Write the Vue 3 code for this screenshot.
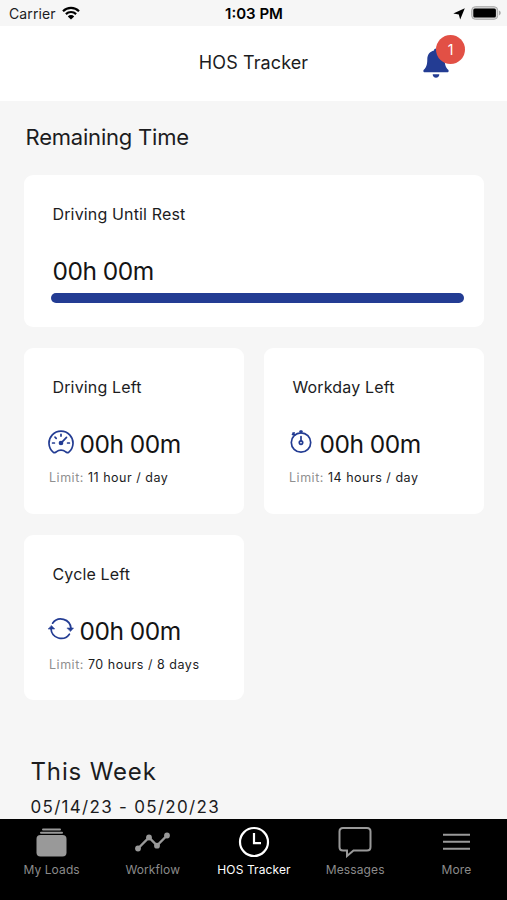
<template>
  <div class="screen">
    <div class="status-bar">
      <div class="carrier">
        <span>Carrier</span>
        <svg class="wifi" viewBox="0 0 18 14">
          <path d="M1 5.2a11.4 11.4 0 0 1 16 0" />
          <path d="M3.9 8.1a7.3 7.3 0 0 1 10.2 0" />
          <path class="wifi-dot" d="M9 13.6L5.8 10.4a4.6 4.6 0 0 1 6.4 0z" />
        </svg>
      </div>
      <span class="clock">1:03 PM</span>
      <div class="indicators">
        <svg class="location" viewBox="0 0 12 12">
          <path d="M11.8 .3L7.200 11.600 5.800 6.500.3 5.600z" />
        </svg>
        <svg class="battery" viewBox="0 0 30 14">
          <rect x=".7" y=".7" width="26" height="12.6" rx="3.6" fill="#d6d6d6" stroke="#a9a9a9" />
          <rect x="2.3" y="2.5" width="22.6" height="9" rx="1.6" fill="#000" />
          <path d="M28 4.6q1.8.9 1.8 2.4T28 9.4z" fill="#a9a9a9" />
        </svg>
      </div>
    </div>

    <header class="header">
      <h1>HOS Tracker</h1>
      <div class="notifications">
        <svg class="bell" viewBox="0 0 26 30">
          <path d="M13 .5c1.2 0 2 .9 2 2 4.300 1 6.700 4.300 6.700 8.800 0 5.800 1.100 8.200 3.500 10.500.9.900.4 2.500-1 2.500H1.800c-1.400 0-1.900-1.600-1-2.500 2.400-2.300 3.500-4.700 3.500-10.500C4.300 6.800 6.700 3.500 11 2.500c0-1.100.8-2 2-2z" />
          <path d="M9.700 26.200h6.600c0 2-1.400 3.500-3.300 3.500s-3.300-1.500-3.300-3.500z" />
        </svg>
        <span class="badge">1</span>
      </div>
    </header>

    <main class="content">
      <h2>Remaining Time</h2>

      <div class="cards">
        <section class="card card-wide">
          <h3>Driving Until Rest</h3>
          <div class="time">00h 00m</div>
          <div class="progress"></div>
        </section>

        <section v-for="card in cards" :key="card.title" class="card">
          <h3>{{ card.title }}</h3>
          <div class="time-row">
            <svg v-if="card.icon === 'gauge'" class="icon" viewBox="0 0 26 26">
              <path d="M5.200 23.200a12 12 0 1 1 15.600 0c-1.300.8-2.500.3-3.400-.6-2.400-2-6.400-2-8.800 0-.9.900-2.100 1.400-3.400.6z" />
              <path d="M13 5.300v1.800M7 8.100l1.200 1.200M4.600 14h1.800M19.600 14h1.800M12.800 14.300l5.700-6" />
              <circle cx="13" cy="14" r="1.500" fill="#233c93" />
            </svg>
            <svg v-else-if="card.icon === 'timer'" class="icon" viewBox="0 0 26 26">
              <circle cx="13" cy="13.500" r="9.700" />
              <path d="M13 1.800v2M12 2.400h2M13 7.500v4.500M5 4.200l1.800 1.800M4.500 5.500l1.600-1.600" />
              <circle cx="13" cy="13.600" r="1.700" />
            </svg>
            <svg v-else class="icon" viewBox="0 0 26 26">
              <path d="M4.600 7.200a10.200 10.200 0 0 1 18.400 5.100M21.400 18.200A10.200 10.200 0 0 1 3 12.800" />
              <path class="arrow" d="M19.300 12h6.200l-2.900 3.300zM.5 13h6.200L3.600 9.700z" />
            </svg>
            <span class="time">00h 00m</span>
          </div>
          <p class="limit">Limit: <span>{{ card.limit }}</span></p>
        </section>
      </div>

      <div class="week">
        <h2>This Week</h2>
        <p>05/14/23 - 05/20/23</p>
      </div>
    </main>

    <nav class="tab-bar">
      <a v-for="tab in tabs" :key="tab.label" class="tab" :class="{ active: tab.active }">
        <svg v-if="tab.icon === 'loads'" viewBox="0 0 36 32">
          <g class="solid">
            <rect x="2.500" y="9" width="30" height="21.500" rx="4" />
            <rect x="6" y="5.800" width="23" height="2" rx="1" />
            <rect x="8" y="2.500" width="19" height="2" rx="1" />
          </g>
        </svg>
        <svg v-else-if="tab.icon === 'workflow'" viewBox="0 0 36 32">
          <path class="trend" d="M3 22.500L14 11.500 22 19.500 32 9.500" />
          <g class="solid">
            <circle cx="3" cy="22.500" r="2.900" />
            <circle cx="14" cy="11.500" r="2.900" />
            <circle cx="22" cy="19.700" r="2.900" />
            <circle cx="32" cy="9.500" r="2.900" />
          </g>
        </svg>
        <svg v-else-if="tab.icon === 'clock'" viewBox="0 0 36 32">
          <circle cx="18" cy="16" r="14" />
          <path d="M18 7v10.200h7" />
        </svg>
        <svg v-else-if="tab.icon === 'messages'" viewBox="0 0 36 32">
          <path class="thin" d="M6 2h24q3.500 0 3.500 3.500v15.500q0 3.500-3.500 3.500H16.500L10 30v-5.500H6q-3.500 0-3.500-3.500V5.500Q2.500 2 6 2z" />
        </svg>
        <svg v-else viewBox="0 0 36 32">
          <path class="thin" d="M5 8.700h27M5 15.700h27M5 22.700h27" />
        </svg>
        <span>{{ tab.label }}</span>
      </a>
    </nav>
  </div>
</template>

<script setup>
const cards = [
  { title: 'Driving Left', icon: 'gauge', limit: '11 hour / day' },
  { title: 'Workday Left', icon: 'timer', limit: '14 hours / day' },
  { title: 'Cycle Left', icon: 'cycle', limit: '70 hours / 8 days' }
];

const tabs = [
  { label: 'My Loads', icon: 'loads' },
  { label: 'Workflow', icon: 'workflow' },
  { label: 'HOS Tracker', icon: 'clock', active: true },
  { label: 'Messages', icon: 'messages' },
  { label: 'More', icon: 'more' }
];
</script>

<style>
body {
  margin: 0;
  background: #f6f6f6;
}
</style>

<style scoped>
.screen {
  display: flex;
  flex-direction: column;
  height: 900px;
  overflow: hidden;
  background: #f6f6f6;
  color: #1c1c1e;
  font-family: Inter, "Liberation Sans", sans-serif;
}

h1, h2, h3, p {
  margin: 0;
  font-weight: 400;
}

svg {
  display: block;
  flex: none;
}

/* Status bar */
.status-bar {
  display: grid;
  grid-template-columns: 1fr auto 1fr;
  align-items: center;
  box-sizing: border-box;
  flex: none;
  height: 26px;
  padding: 1px 6px 0 9px;
  font-size: 14px;
  line-height: 25px;
}

.carrier {
  display: flex;
  align-items: center;
  gap: 6px;
  letter-spacing: 0.1px;
}

.wifi {
  width: 18px;
  height: 14px;
  margin-top: -2px;
  fill: none;
  stroke: #000;
  stroke-width: 2.2;
}

.wifi .wifi-dot {
  fill: #000;
  stroke: none;
}

.clock {
  margin-right: 2px;
  color: #000;
  font-size: 15px;
  font-weight: 600;
}

.indicators {
  display: flex;
  align-items: center;
  justify-content: flex-end;
  gap: 6px;
}

.location {
  width: 12px;
  height: 12px;
}

.battery {
  width: 30px;
  height: 14px;
  margin-top: -1px;
}

/* Header */
.header {
  display: grid;
  grid-template-columns: 1fr auto 1fr;
  align-items: center;
  flex: none;
  height: 75px;
  background: #fff;
}

.header h1 {
  grid-column: 2;
  margin-top: -2px;
  font-size: 18px;
  letter-spacing: 0.1px;
}

.notifications {
  position: relative;
  justify-self: end;
  width: 26px;
  height: 30px;
  margin: -2px 58px 0 0;
}

.bell {
  width: 26px;
  height: 30px;
  fill: #233c93;
}

.badge {
  position: absolute;
  top: -13px;
  left: 13px;
  width: 29px;
  height: 29px;
  border-radius: 50%;
  background: #e25045;
  color: #fff;
  font-size: 14px;
  line-height: 29px;
  text-align: center;
}

/* Cards */
.content {
  flex: 1;
  min-height: 0;
  padding: 21px 23px 0 24px;
  overflow: hidden;
}

.content > h2 {
  padding-left: 1.5px;
  font-size: 22px;
  line-height: 30px;
  letter-spacing: -0.2px;
}

.cards {
  display: grid;
  grid-template-columns: 1fr 1fr;
  gap: 21px 20px;
  margin-top: 23px;
}

.card {
  box-sizing: border-box;
  height: 165.5px;
  padding: 28px 20px 0 28.5px;
  border-radius: 9px;
  background: #fff;
}

.card-wide {
  grid-column: 1 / -1;
  height: 152px;
}

.card h3 {
  font-size: 16px;
  line-height: 23px;
  letter-spacing: 0.15px;
}

.time {
  color: #141414;
  font-size: 24.5px;
  line-height: 30px;
  letter-spacing: -0.5px;
}

.card-wide .time {
  margin-top: 30px;
}

.progress {
  height: 10px;
  margin: 7px 0 0 -1.5px;
  border-radius: 5px;
  background: #233c93;
}

.time-row {
  display: flex;
  gap: 5.5px;
  margin: 30px 0 0 -4.5px;
}

.icon {
  width: 26px;
  height: 26px;
  fill: none;
  stroke: #233c93;
  stroke-width: 1.7;
  stroke-linecap: round;
}

.icon .arrow {
  fill: #233c93;
  stroke-width: 0.6;
}

.limit {
  margin: 10px 0 0 -3.5px;
  color: #909090;
  font-size: 12.5px;
  line-height: 18px;
  letter-spacing: 0.52px;
}

.limit span {
  color: #1c1c1e;
}

/* Week summary */
.week {
  margin: 56px 0 0 6.5px;
}

.week h2 {
  font-size: 24px;
  line-height: 32px;
  letter-spacing: 0.85px;
}

.week p {
  margin-top: 8px;
  font-size: 17px;
  line-height: 22px;
  letter-spacing: 1.3px;
}

/* Tab bar */
.tab-bar {
  display: grid;
  grid-template-columns: repeat(5, 1fr);
  flex: none;
  height: 81px;
  padding-left: 1px;
  background: #000;
}

.tab {
  display: flex;
  flex-direction: column;
  align-items: center;
  padding-top: 6.5px;
  color: #8b8b8b;
  font-size: 12px;
  line-height: 16px;
  letter-spacing: 0.1px;
  white-space: nowrap;
}

.tab span {
  margin-top: 4.5px;
}

.tab.active {
  color: #fff;
}

.tab svg {
  width: 36px;
  height: 32px;
  fill: none;
  stroke: currentColor;
  stroke-width: 2.2;
}

.tab .solid {
  fill: #999;
  stroke: none;
}

.tab .trend {
  stroke: #999;
  stroke-width: 2.4;
}

.tab .thin {
  stroke: #999;
  stroke-width: 2;
}
</style>
